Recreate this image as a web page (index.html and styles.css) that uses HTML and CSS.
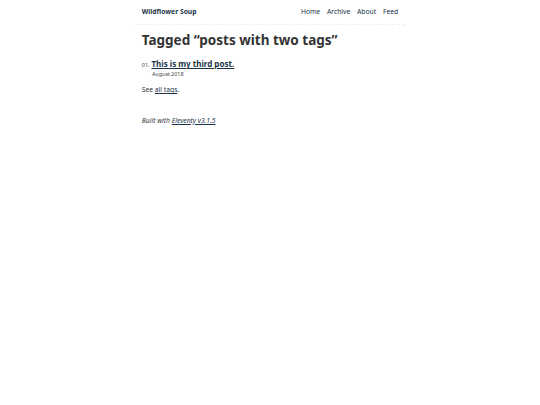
FILE: index.html
```html
<!doctype html>
<html lang="en">
<head>
<meta charset="utf-8">
<title>Tagged posts with two tags</title>
<link rel="stylesheet" href="styles.css">
</head>
<body>
<header>
  <a href="#" class="home-link">Wildflower Soup</a>
  <nav>
    <ul class="nav">
      <li class="nav-item"><a href="#">Home</a></li>
      <li class="nav-item"><a href="#">Archive</a></li>
      <li class="nav-item"><a href="#">About</a></li>
      <li class="nav-item"><a href="#">Feed</a></li>
    </ul>
  </nav>
</header>
<main>
  <h1>Tagged “posts with two tags”</h1>
  <ol reversed class="postlist">
    <li class="postlist-item">
      <a href="#" class="postlist-link">This is my third post.</a>
      <time class="postlist-date">August 2018</time>
    </li>
  </ol>
  <p>See <a href="#">all tags</a>.</p>
</main>
<footer>
  <p><em>Built with <a href="#">Eleventy v3.1.5</a></em></p>
</footer>
</body>
</html>
```

FILE: styles.css
```css
* { box-sizing: border-box; }

html { font-size: 6.75px; }

html, body {
  padding: 0;
  margin: 0 auto;
  font-family: "Noto Sans", "Open Sans", sans-serif;
  color: #3a3a3a;
  background-color: #fff;
}

body {
  max-width: 40em;
  font-size: 6.75px;
}

p { line-height: 1.5; }
p:last-child { margin-bottom: 0; }
li { line-height: 1.5; }

a { color: #1c3448; }

main, footer { padding: 1rem; }
main :first-child { margin-top: 0; }

header {
  display: flex;
  gap: 1em;
  flex-wrap: wrap;
  justify-content: space-between;
  align-items: center;
  padding: 1em;
  border-bottom: 1px dashed #f0f0f0;
}

.home-link {
  flex-grow: 1;
  font-size: 1em;
  font-weight: 700;
  text-decoration: none;
}

.nav {
  display: flex;
  gap: .5em 1em;
  padding: 0;
  margin: 0;
  list-style: none;
}
.nav-item { display: inline-block; }
.nav-item a { text-decoration: none; }

h1 {
  font-size: 2em;
  margin: 0 0 0.67em;
  color: #333;
}

.postlist {
  counter-reset: start-from 2;
  list-style: none;
  padding: 0;
  padding-left: 1.5rem;
  margin: 1em 0;
}
.postlist-item {
  display: flex;
  flex-wrap: wrap;
  align-items: baseline;
  counter-increment: start-from -1;
  margin-bottom: 1em;
}
.postlist-item::before {
  display: inline-block;
  pointer-events: none;
  content: "" counter(start-from, decimal-leading-zero) ". ";
  line-height: 100%;
  text-align: right;
  margin-left: -1.5rem;
}
.postlist-date,
.postlist-item::before {
  font-size: 0.8125em;
  color: #444;
}
.postlist-date { word-spacing: -0.5px; }
.postlist-link {
  font-size: 1.1875em;
  font-weight: 700;
  flex-basis: calc(100% - 1.5rem);
  padding-left: .25em;
  padding-right: .5em;
  text-underline-position: from-font;
  text-underline-offset: 0;
  text-decoration-thickness: 1px;
}

footer p { margin: 1em 0 0; }
```
